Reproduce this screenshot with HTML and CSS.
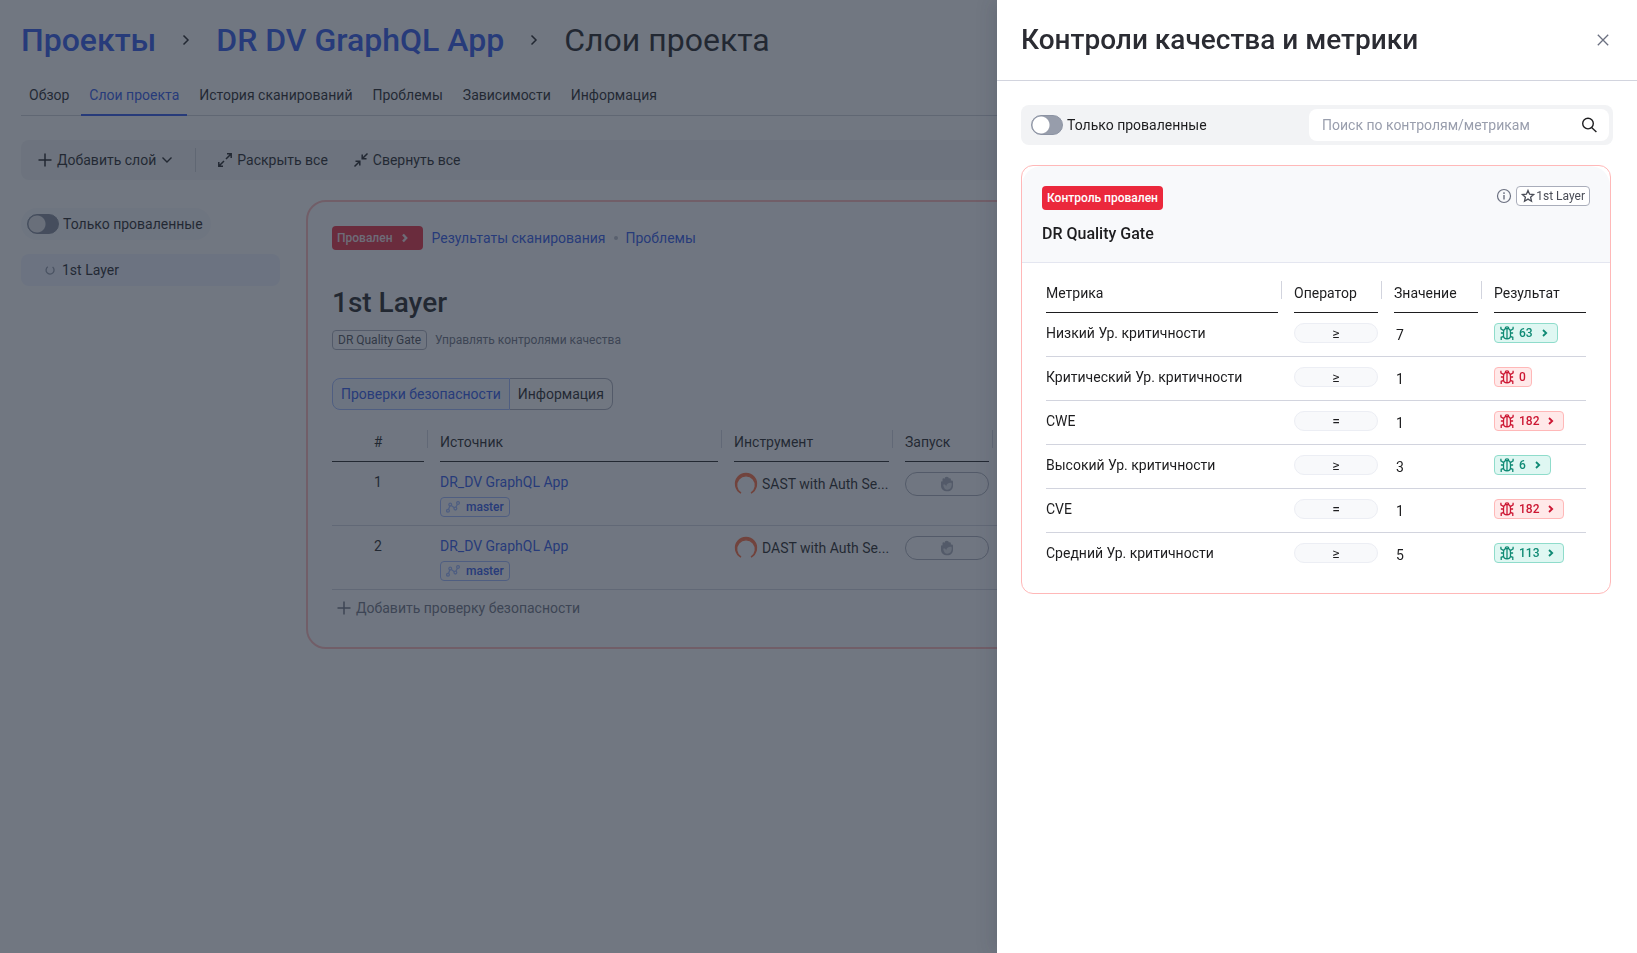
FILE: index.html
```html
<!DOCTYPE html>
<html lang="ru">
<head>
<meta charset="utf-8">
<title>DR DV GraphQL App — Слои проекта</title>
<link rel="stylesheet" href="styles.css">
</head>
<body>
<svg class="sprite" aria-hidden="true">
  <symbol id="i-chev" viewBox="0 0 8 12"><path d="M1.5 1.5 6 6l-4.500 4.500" fill="none" stroke="currentColor" stroke-width="1.500"/></symbol>
  <symbol id="i-plus" viewBox="0 0 14 14"><path d="M7 .5v13M.5 7h13" fill="none" stroke="currentColor" stroke-width="1.500"/></symbol>
  <symbol id="i-bug" viewBox="0 0 14 14"><g fill="none" stroke="currentColor" stroke-width="1.300"><path d="M5.500 2.600h3c1.400.6 2 1.900 2 3.700v3.200c0 2-1.300 3.400-3.500 3.400S3.500 11.500 3.500 9.500V6.300c0-1.800.6-3.100 2-3.700zM7 3v9.800M5.200 2.600C5.200 1.300 5.900.8 7 .8s1.800.5 1.800 1.800M.9.800v2l2.900 2M13.100.8v2l-2.900 2M.9 7h2.600M10.500 7h2.600M3.800 10.300l-2.600 1V14M10.200 10.300l2.600 1V14"/></g></symbol>
  <symbol id="i-go" viewBox="0 0 6 8"><path d="M1 1l3.200 3L1 7" fill="none" stroke="currentColor" stroke-width="1.800"/></symbol>
  <symbol id="i-branch" viewBox="0 0 14 12"><g fill="none" stroke="currentColor" stroke-width="1.300"><circle cx="2" cy="9.800" r="1.400"/><circle cx="4.200" cy="3.600" r="1.400"/><circle cx="9.400" cy="7.600" r="1.400"/><circle cx="12" cy="2" r="1.400"/><path d="M2.500 8.500 3.800 5M5.300 4.500l3 2.200M9.900 6.300l1.500-3"/></g></symbol>
  <symbol id="i-hand" viewBox="0 0 14 16"><path d="M1 6.500c0-1.300 1.200-1.500 1.500-.8V3.300c0-1.300 1.700-1.300 2-.3.100-1.300 1-2.200 2.300-2.200s1.900.8 2.100 1.700c.9-.5 2 0 2 1.200v1c1-.4 2.100.1 2.100 1.300v4c0 3-2.300 5.300-5.600 5.300C3.500 15.300 1 13 1 10z" fill="currentColor"/><path d="M3.200 8.800c1.200-.6 2.500 0 3 1.400.3-1.900 1.900-3.200 4.400-3.400.9-.1 1.200.5 1.200 1.300 0 3.500-1.600 5.700-4.500 5.700-2.200 0-3.800-1.900-4.100-5z" class="palm"/></symbol>
</svg>

<div class="page">
  <nav class="crumbs">
    <a href="#">Проекты</a><svg class="chev"><use href="#i-chev"/></svg><a href="#">DR DV GraphQL App</a><svg class="chev"><use href="#i-chev"/></svg><h1>Слои проекта</h1>
  </nav>
  <nav class="tabs">
    <a href="#">Обзор</a><a href="#" class="active">Слои проекта</a><a href="#">История сканирований</a><a href="#">Проблемы</a><a href="#">Зависимости</a><a href="#">Информация</a>
  </nav>
  <div class="toolbar">
    <button type="button" class="first"><svg width="14" height="14"><use href="#i-plus"/></svg>Добавить слой<svg width="12" height="8" viewBox="0 0 12 8"><path d="m1.500 1.500 4.500 4.500 4.500-4.500" fill="none" stroke="currentColor" stroke-width="1.400"/></svg></button>
    <span class="divider"></span>
    <button type="button"><svg width="14" height="14" viewBox="0 0 14 14"><path d="M8 6l5-5M9 .800h4.200V5M6 8l-5 5M.800 9v4.200H5" fill="none" stroke="currentColor" stroke-width="1.500"/></svg>Раскрыть все</button>
    <button type="button"><svg width="14" height="14" viewBox="0 0 14 14"><path d="M13.500.5 8.700 5.300M8.200 1.500v4.300h4.300M.5 13.500l4.800-4.800M1.500 8.200h4.300v4.300" fill="none" stroke="currentColor" stroke-width="1.500"/></svg>Свернуть все</button>
  </div>
  <div class="columns">
    <aside>
      <label class="switch pill"><input type="checkbox">Только проваленные</label>
      <a href="#" class="layer"><svg width="8" height="10" viewBox="0 0 8 10"><path d="M1.800 1.800a4 4 0 1 0 4.800.2" fill="none" stroke="#8f96a6" stroke-width="1.300"/></svg>1st Layer</a>
    </aside>
    <main class="card">
      <div class="links">
        <button type="button" class="status">Провален<svg width="6" height="8" viewBox="0 0 6 8"><path d="M1 .5 4.200 4 1 7.500" fill="none" stroke="currentColor" stroke-width="2.400"/></svg></button>
        <a href="#">Результаты сканирования</a><span class="dot"></span><a href="#">Проблемы</a>
      </div>
      <h2>1st Layer</h2>
      <div class="gates"><span class="tag">DR Quality Gate</span><a href="#">Управлять контролями качества</a></div>
      <div class="segments"><button type="button" class="on">Проверки безопасности</button><button type="button">Информация</button></div>
      <table class="grid checks">
        <colgroup><col class="c-num"><col class="c-src"><col class="c-tool"><col class="c-run"><col></colgroup>
        <thead><tr><th class="center"><div>#</div></th><th><div>Источник</div></th><th><div>Инструмент</div></th><th><div>Запуск</div></th><th><div></div></th></tr></thead>
        <tbody>
          <tr><td class="center">1</td><td><a href="#">DR_DV GraphQL App</a><span class="tag branch"><svg width="14" height="12"><use href="#i-branch"/></svg>master</span></td>
            <td><div class="tool"><svg width="24" height="24" viewBox="0 0 24 24"><path d="M7 21.200A10.500 10.500 0 1 1 17 21.200 9.400 9.400 0 1 0 7 21.200z" fill="#ff6b3d" stroke="#ff6b3d" stroke-width="1.400"/></svg>SAST with Auth Se...</div></td>
            <td><button type="button" class="run" aria-label="Запуск вручную"><svg width="14" height="16"><use href="#i-hand"/></svg></button></td><td></td></tr>
          <tr><td class="center">2</td><td><a href="#">DR_DV GraphQL App</a><span class="tag branch"><svg width="14" height="12"><use href="#i-branch"/></svg>master</span></td>
            <td><div class="tool"><svg width="24" height="24" viewBox="0 0 24 24"><path d="M7 21.200A10.500 10.500 0 1 1 17 21.200 9.400 9.400 0 1 0 7 21.200z" fill="#ff6b3d" stroke="#ff6b3d" stroke-width="1.400"/></svg>DAST with Auth Se...</div></td>
            <td><button type="button" class="run" aria-label="Запуск вручную"><svg width="14" height="16"><use href="#i-hand"/></svg></button></td><td></td></tr>
        </tbody>
      </table>
      <button type="button" class="add"><svg width="14" height="14"><use href="#i-plus"/></svg>Добавить проверку безопасности</button>
    </main>
  </div>
</div>

<div class="mask"></div>
<section class="drawer" role="dialog" aria-labelledby="drawer-title">
  <header>
    <h2 id="drawer-title">Контроли качества и метрики</h2>
    <button type="button" aria-label="Закрыть"><svg width="12" height="12" viewBox="0 0 12 12"><path d="m.8.8 10.400 10.400M11.200.8.8 11.200" fill="none" stroke="currentColor" stroke-width="1.300"/></svg></button>
  </header>
  <div class="filter">
    <label class="switch"><input type="checkbox">Только проваленные</label>
    <div class="search"><input type="text" aria-label="Поиск" placeholder="Поиск по контролям/метрикам"><button type="button" aria-label="Найти"><svg width="16" height="16" viewBox="0 0 16 16"><g fill="none" stroke="currentColor" stroke-width="1.400"><circle cx="7" cy="6.600" r="5.300"/><path d="m10.600 10.400 4.800 4.600"/></g></svg></button></div>
  </div>
  <article class="gate">
    <div class="gate-head">
      <div class="gate-top">
        <span class="status">Контроль провален</span>
        <svg width="16" height="16" viewBox="0 0 16 16"><circle cx="8" cy="8" r="6.500" fill="none" stroke="#6b7080" stroke-width="1.200"/><path d="M8 7v4.500M8 4.300V6" stroke="#6b7080" stroke-width="1.400"/></svg>
        <span class="tag star"><svg width="14" height="14" viewBox="0 0 14 14"><path d="m7 1.500 1.600 3.700 4 .3-3 2.700.9 4L7 10.100l-3.500 2.100.9-4-3-2.700 4-.3z" fill="none" stroke="currentColor" stroke-width="1.300"/></svg>1st Layer</span>
      </div>
      <h3>DR Quality Gate</h3>
    </div>
    <table class="grid metrics">
      <colgroup><col><col class="c-op"><col class="c-op"><col class="c-res"></colgroup>
      <thead><tr><th><div>Метрика</div></th><th><div>Оператор</div></th><th><div>Значение</div></th><th><div>Результат</div></th></tr></thead>
      <tbody>
        <tr><td>Низкий Ур. критичности</td><td><span class="op">≥</span></td><td class="val">7</td><td><a href="#" class="tag ok"><svg width="14" height="14"><use href="#i-bug"/></svg>63<svg class="go" width="6" height="8"><use href="#i-go"/></svg></a></td></tr>
        <tr><td>Критический Ур. критичности</td><td><span class="op">≥</span></td><td class="val">1</td><td><span class="tag bad"><svg width="14" height="14"><use href="#i-bug"/></svg>0</span></td></tr>
        <tr><td>CWE</td><td><span class="op">=</span></td><td class="val">1</td><td><a href="#" class="tag bad"><svg width="14" height="14"><use href="#i-bug"/></svg>182<svg class="go" width="6" height="8"><use href="#i-go"/></svg></a></td></tr>
        <tr><td>Высокий Ур. критичности</td><td><span class="op">≥</span></td><td class="val">3</td><td><a href="#" class="tag ok"><svg width="14" height="14"><use href="#i-bug"/></svg>6<svg class="go" width="6" height="8"><use href="#i-go"/></svg></a></td></tr>
        <tr><td>CVE</td><td><span class="op">=</span></td><td class="val">1</td><td><a href="#" class="tag bad"><svg width="14" height="14"><use href="#i-bug"/></svg>182<svg class="go" width="6" height="8"><use href="#i-go"/></svg></a></td></tr>
        <tr><td>Средний Ур. критичности</td><td><span class="op">≥</span></td><td class="val">5</td><td><a href="#" class="tag ok"><svg width="14" height="14"><use href="#i-bug"/></svg>113<svg class="go" width="6" height="8"><use href="#i-go"/></svg></a></td></tr>
      </tbody>
    </table>
  </article>
</section>
</body>
</html>
```
FILE: styles.css
```css
*, *::before, *::after { box-sizing: border-box; }

body {
  margin: 0;
  min-height: 100vh;
  background: #fff;
  color: #1d1d1f;
  font-family: Roboto, "Open Sans", sans-serif;
  font-size: 14px;
  line-height: 20px;
}

a { color: inherit; text-decoration: none; }
h1, h2, h3 { margin: 0; font-weight: 500; }
svg { flex: none; overflow: visible; }
button, input { font: inherit; color: inherit; }
button { border: 0; padding: 0; background: none; cursor: pointer; display: flex; align-items: center; white-space: nowrap; }
.sprite { display: none; }

/* Page */
.page { padding: 20px 21px; }

.crumbs { display: flex; align-items: center; gap: 26px; font-size: 32px; line-height: 40px; }
.crumbs a { color: #2b54ea; font-weight: 500; }
.crumbs h1 { font-size: 32px; font-weight: 400; }
.chev { width: 8px; height: 12px; }

.tabs { display: flex; gap: 4px; margin-top: 14px; border-bottom: 1px solid #cdd0d8; }
.tabs a { padding: 11px 8px 9px; border-bottom: 2px solid transparent; margin-bottom: -1px; }
.tabs .active { color: #2b54ea; border-color: #2b54ea; }

.toolbar {
  display: flex;
  align-items: center;
  gap: 26px;
  height: 40px;
  margin-top: 24px;
  padding: 0 17px;
  border-radius: 8px;
  background: #f2f3f5;
}
.toolbar button { gap: 5px; }
.toolbar .first, .divider { margin-right: -4px; }
.divider { width: 1px; height: 24px; background: #cdd0d8; }

.columns { display: flex; align-items: flex-start; gap: 26px; margin-top: 20px; }
aside { flex: 0 0 259px; padding-top: 8px; }

.switch { display: inline-flex; align-items: center; gap: 4px; }
.switch input {
  appearance: none;
  flex: none;
  width: 32px;
  height: 20px;
  margin: 0;
  border: 1px solid #8c93a3;
  border-radius: 10px;
  background: radial-gradient(circle at 9px 9px, #fff 8px, #979dab 9px);
}
.pill { height: 32px; padding: 0 8px 0 6px; border-radius: 16px; background: #f7f8fb; }
.page .switch input { border-color: #808899; background: radial-gradient(circle at 9px 9px, #e8e9ec 8px, #808899 9px); }

.layer {
  display: flex;
  align-items: center;
  gap: 8px;
  height: 32px;
  margin-top: 14px;
  padding: 0 25px;
  border-radius: 8px;
  background: #f0f3ff;
}

.card { flex: 1; min-width: 0; padding: 24px; border: 2px solid #ffb8b8; border-radius: 20px; background: #fdfdfe; }
.links { display: flex; align-items: center; }
.links a { color: #2b54ea; }
.dot { width: 4px; height: 4px; margin: 0 8px; border-radius: 2px; background: #b9bdc9; }

.status {
  display: inline-flex;
  align-items: center;
  gap: 9px;
  height: 24px;
  padding: 0 5px;
  border-radius: 4px;
  background: #eb283c;
  color: #fff;
  font-size: 12px;
  font-weight: 500;
}
.links .status { margin-right: 9px; padding-right: 15px; color: #f3dfe2; }

.card h2 { margin-top: 33px; font-size: 28px; line-height: 40px; }
.gates { display: flex; align-items: center; gap: 8px; margin-top: 7px; color: #6b7080; font-size: 12px; }

.tag {
  display: inline-flex;
  align-items: center;
  gap: 6px;
  height: 20px;
  padding: 0 5px;
  border: 1px solid #a9adba;
  border-radius: 4px;
  color: #4a4d57;
  font-size: 12px;
  line-height: 18px;
}

.segments { display: flex; margin-top: 28px; }
.segments button { height: 32px; padding: 0 8px; border: 1px solid #a9adba; border-left: 0; border-radius: 0 8px 8px 0; background: #fff; }
.segments .on { border: 1px solid #9db8ff; border-radius: 8px 0 0 8px; background: #f0f5ff; color: #2b54ea; }

/* Tables */
.grid { width: 100%; border-spacing: 0; table-layout: fixed; }
.grid th, .grid td { padding: 0 16px 0 0; text-align: left; vertical-align: top; font-weight: 400; }
.grid th:last-child, .grid td:last-child { padding-right: 0; }
.grid th div { position: relative; height: 40px; padding-top: 10px; border-bottom: 1px solid #1d1d1f; }
.grid th:not(:last-child) div::after { content: ""; position: absolute; top: 8px; right: -4px; width: 1px; height: 18px; background: #d2d4de; }
.grid .center { text-align: center; }
.grid td { border-bottom: 1px solid #d2d4de; }

.checks { margin-top: 12px; }
.checks td { height: 64px; padding-top: 10px; }
.checks td a { display: block; color: #2b54ea; }
.c-num { width: 108px; }
.c-src { width: 294px; }
.c-tool { width: 171px; }
.c-run { width: 100px; }
.branch { margin-top: 5px; border-color: #9db8ff; color: #2b54ea; font-weight: 500; }
.branch svg { color: #9db8ff; }
.tool { display: flex; align-items: center; gap: 4px; white-space: nowrap; }
.run { justify-content: center; width: 100%; height: 24px; border: 1px solid #a9adba; border-radius: 12px; color: #a9adba; }
.palm { fill: #dfe1e7; }

.add { gap: 5px; margin: 8px 0 5px; padding-left: 5px; color: #6b7080; }

/* Drawer */
.mask { position: fixed; inset: 0; background: rgba(37, 46, 62, .65); }
.drawer {
  position: fixed;
  inset: 0 0 0 auto;
  width: 640px;
  max-width: 100%;
  overflow: auto;
  background: #fff;
  box-shadow: -6px 0 16px rgba(31, 41, 55, .12);
}
.drawer header { display: flex; align-items: center; justify-content: space-between; height: 81px; padding: 0 28px 0 24px; border-bottom: 1px solid #d2d4de; }
.drawer h2 { font-size: 28px; line-height: 36px; color: #2b2c33; }
.drawer header button { color: #6b7080; }

.filter { display: flex; align-items: center; justify-content: space-between; height: 40px; margin: 24px 24px 20px; padding: 4px 4px 4px 10px; border-radius: 8px; background: #f2f3f5; }
.search { display: flex; align-items: center; width: 300px; height: 32px; padding: 0 12px 0 13px; border-radius: 8px; background: #fff; }
.search input { flex: 1; min-width: 0; border: 0; padding: 0; outline: 0; background: none; }
.search input::placeholder { color: #999ead; opacity: 1; }

.gate { margin: 0 26px 24px 24px; border: 1px solid #ffb8b8; border-radius: 12px; }
.gate-head { padding: 20px 20px 16px; border-bottom: 1px solid #e4e6f0; border-radius: 20px 20px 0 0; background: #f8f9fb; }
.gate-top { display: flex; align-items: flex-start; gap: 4px; }
.gate-top .status { margin-right: auto; }
.gate-top > svg { margin-top: 2px; }
.star { gap: 1px; padding: 0 4px; background: #fff; }
.gate h3 { margin-top: 12px; font-size: 16px; line-height: 24px; }

.metrics { padding: 10px 24px 16px; }
.c-op { width: 100px; }
.c-res { width: 92px; }
.metrics td { height: 44px; padding-top: 10px; }
.metrics tr:last-child td { border-bottom: 0; }
.metrics .val { padding: 12px 0 0 2px; }
.op { display: flex; justify-content: center; height: 20px; border: 1px solid #eceef4; border-radius: 10px; background: #f8f9fb; line-height: 18px; }
.ok { border-color: #8fdccb; background: #dff7f2; color: #0f8a74; font-weight: 500; }
.bad { border-color: #ffb8b8; background: #ffe9e9; color: #cc1733; font-weight: 500; }
.ok, .bad { gap: 5px; }
.go { margin: 0 4px; }
```
